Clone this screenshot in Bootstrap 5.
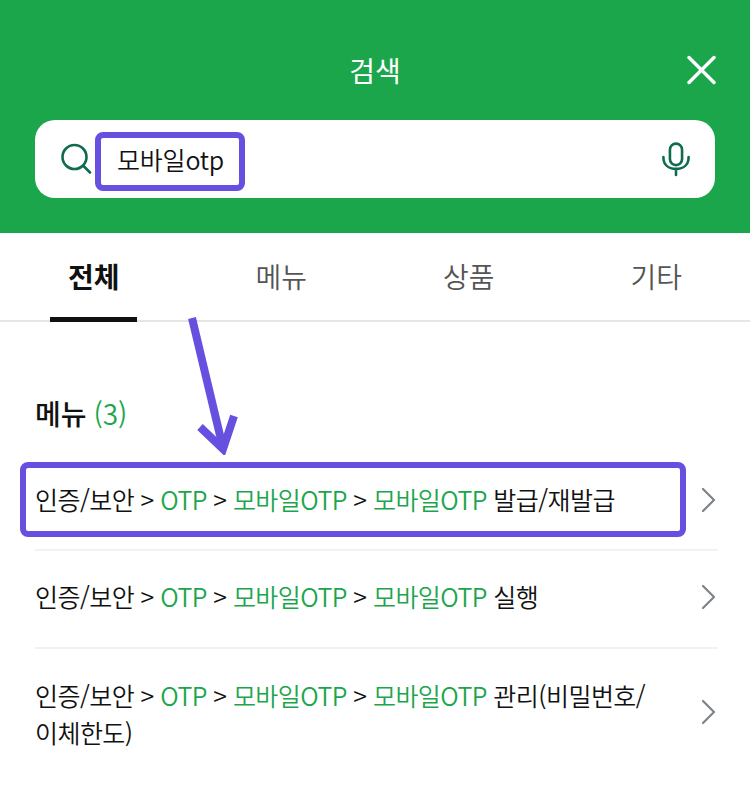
<!DOCTYPE html>
<html lang="ko">
<head>
<meta charset="utf-8">
<title>검색</title>
<link href="https://cdn.jsdelivr.net/npm/bootstrap@5.3.0/dist/css/bootstrap.min.css" rel="stylesheet">
<style>
html,body{margin:0;background:#fff;height:798px;overflow:hidden}
body{font-family:"Noto Sans CJK KR","Noto Sans",sans-serif;color:#111;position:relative;width:750px}
.hdr{background:#1ca64c;height:233px;padding:0 35px}
.hdr-top{height:120px;color:#fff;font-size:28px;font-weight:400;position:relative;padding-top:20px}
.hdr-close{position:absolute;right:-1px;top:55px;width:30px;height:30px}
.srch{height:78px;background:#fff;border-radius:20px;padding:0 25px}
.srch-text{font-size:25px;margin-left:25px;line-height:1;letter-spacing:-.2px;font-weight:350}
.tabbar{height:89px;border-bottom:2px solid #e6e6e6}
.tabitem{flex:1 1 0;font-size:28px;color:#555;font-weight:350;position:relative;padding-bottom:2px}
.tabitem.on{color:#111;font-weight:700}
.tabitem.on::after{content:"";position:absolute;left:50px;width:87px;bottom:-2px;height:5px;background:#111}
.sect{padding:0 35px}
.sect-h{font-size:28px;font-weight:500;margin:0;height:132px;padding-top:71px;line-height:40px;box-sizing:border-box;word-spacing:-1px}
.hit{color:#1ca64c;font-weight:350}
.rowi{border-bottom:2px solid #f2f2f2;font-size:25px;line-height:37px;letter-spacing:-.55px;font-weight:350;margin-right:-3px}
.rowi:last-child{border-bottom:0}
.rowi>div{padding-bottom:5px}
.rowi.a{height:97px}.rowi.b{height:98px}.rowi.c{height:130px}
.rowi svg{flex:none;width:18px;height:28px;margin-bottom:4px}
.rowi.c>div{padding-bottom:0}
.note{position:absolute;border:6px solid #6650e0;border-radius:8px}
.note1{left:95px;top:132px;width:150px;height:59px}
.note2{left:20px;top:462px;width:666px;height:75px}
.arrow{position:absolute;left:185px;top:315px;width:60px;height:140px}
</style>
</head>
<body>
<header class="hdr">
  <div class="hdr-top d-flex align-items-center justify-content-center">
    <span>검색</span>
    <svg class="hdr-close" viewBox="0 0 30 30" fill="none" stroke="#fff" stroke-width="3.4" stroke-linecap="round"><path d="M3 2.5 28 27.5M28 2.5 3 27.5"/></svg>
  </div>
  <div class="srch d-flex align-items-center">
    <svg width="32" height="32" viewBox="0 0 32 32" fill="none" stroke="#0e6b50" stroke-width="2.6" stroke-linecap="round"><circle cx="14.5" cy="14" r="12"/><path d="M23.5 23 30 29.5"/></svg>
    <span class="srch-text">모바일otp</span>
    <svg class="ms-auto" width="28" height="35" viewBox="0 0 30 37" fill="none" stroke="#0e6b50" stroke-width="2.8" stroke-linecap="round"><rect x="8.500" y="1.500" width="13" height="23" rx="6.500"/><path d="M1.500 16c0 8 5.500 12.500 13.500 12.500S28.500 24 28.500 16M15 28.500V35"/></svg>
  </div>
</header>
<nav class="tabbar d-flex">
  <div class="tabitem on d-flex align-items-center justify-content-center">전체</div>
  <div class="tabitem d-flex align-items-center justify-content-center">메뉴</div>
  <div class="tabitem d-flex align-items-center justify-content-center">상품</div>
  <div class="tabitem d-flex align-items-center justify-content-center">기타</div>
</nav>
<main class="sect">
  <h2 class="sect-h">메뉴 <span class="hit">(3)</span></h2>
  <div class="rowi a d-flex align-items-center justify-content-between">
    <div>인증/보안 &gt; <span class="hit">OTP</span> &gt; <span class="hit">모바일OTP</span> &gt; <span class="hit">모바일OTP</span> 발급/재발급</div>
    <svg viewBox="0 0 18 28" fill="none" stroke="#7d8489" stroke-width="2.200" stroke-linecap="round" stroke-linejoin="round"><path d="M3 3 14 14 3 25"/></svg>
  </div>
  <div class="rowi b d-flex align-items-center justify-content-between">
    <div>인증/보안 &gt; <span class="hit">OTP</span> &gt; <span class="hit">모바일OTP</span> &gt; <span class="hit">모바일OTP</span> 실행</div>
    <svg viewBox="0 0 18 28" fill="none" stroke="#7d8489" stroke-width="2.200" stroke-linecap="round" stroke-linejoin="round"><path d="M3 3 14 14 3 25"/></svg>
  </div>
  <div class="rowi c d-flex align-items-center justify-content-between">
    <div>인증/보안 &gt; <span class="hit">OTP</span> &gt; <span class="hit">모바일OTP</span> &gt; <span class="hit">모바일OTP</span> 관리(비밀번호/<br>이체한도)</div>
    <svg viewBox="0 0 18 28" fill="none" stroke="#7d8489" stroke-width="2.200" stroke-linecap="round" stroke-linejoin="round"><path d="M3 3 14 14 3 25"/></svg>
  </div>
</main>
<div class="note note1"></div>
<div class="note note2"></div>
<svg class="arrow" viewBox="0 0 60 140" fill="none" stroke="#6650e0" stroke-width="8"><path d="M7 3 38 133"/><path d="M15 112 38 134 49 101"/></svg>
</body>
</html>
